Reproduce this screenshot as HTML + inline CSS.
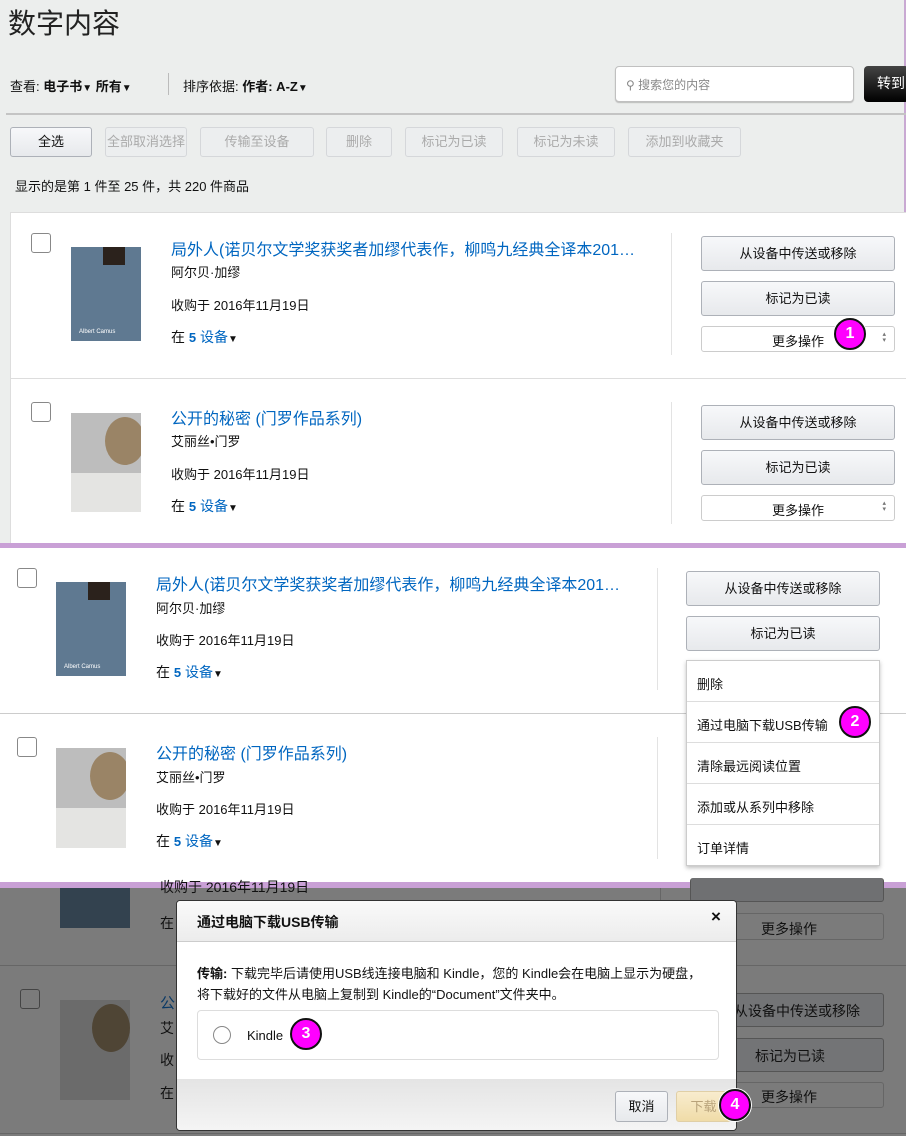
<!DOCTYPE html>
<html><head><meta charset="utf-8"><style>
*{margin:0;padding:0;box-sizing:border-box}
body{width:906px;height:1136px;position:relative;overflow:hidden;font-family:"Liberation Sans","Noto Sans CJK SC",sans-serif;color:#111;font-size:13px;background:#fff}
.a{position:absolute;white-space:nowrap}
.btn{position:absolute;border:1px solid #adb1b8;border-radius:3px;background:linear-gradient(#f7f8fa,#e7e9ec);text-align:center;font-size:13px;color:#111}
.dis{color:#aaa;border-color:#d5d7da;background:#eceeef}
.sel{position:absolute;border:1px solid #ccc;border-radius:3px;background:#fff;text-align:center;font-size:13px}
.sel:after{content:"\25B4\A\25BE";white-space:pre;position:absolute;right:8px;top:5px;font-size:7px;line-height:6px;color:#777}
.cb{position:absolute;width:20px;height:20px;border:1px solid #888;border-radius:3px;background:#fff}
.lnk{color:#0066c0}
.t{font-size:16px;color:#0066c0}
.num{position:absolute;width:32px;height:32px;border-radius:50%;background:#f0f;border:2px solid #111;box-shadow:0 0 0 1px #fff;color:#fff;font-weight:bold;font-size:16px;text-align:center;line-height:28px}
.c1{position:absolute;width:70px;background:#5f7991;overflow:hidden}
.c2{position:absolute;width:70px;background:#d8d8d8;overflow:hidden}
.tri{font-size:10px}
.dv{font-size:14px}
</style></head><body>

<!-- PANEL 1 -->
<div class="a" style="left:0;top:0;width:906px;height:545px;background:#eceeed"></div>
<div class="a" style="left:904px;top:0;width:2px;height:545px;background:#c9a9d3"></div>
<div class="a" style="left:8px;top:2px;font-size:28px;color:#222">数字内容</div>
<div class="a" style="left:10px;top:76px;font-size:13px">查看: <b>电子书</b><span class="tri">▼</span> <b>所有</b><span class="tri">▼</span></div>
<div class="a" style="left:168px;top:73px;width:1px;height:22px;background:#bbb"></div>
<div class="a" style="left:183px;top:76px;font-size:13px">排序依据: <b>作者: A-Z</b><span class="tri">▼</span></div>
<div class="a" style="left:615px;top:66px;width:239px;height:36px;border:1px solid #c0c0c0;border-radius:4px;background:#fff;box-shadow:0 1px 1px #bbb"></div>
<div class="a" style="left:626px;top:76px;font-size:12px;color:#888">⚲ 搜索您的内容</div>
<div class="a" style="left:864px;top:66px;width:45px;height:36px;border-radius:4px;background:linear-gradient(#444,#000);color:#fff;font-size:14px;padding:7px 0 0 13px">转到</div>
<div class="a" style="left:6px;top:113px;width:900px;height:2px;background:#c4c4c4"></div>
<div class="btn" style="left:10px;top:127px;width:82px;height:30px;line-height:28px">全选</div>
<div class="btn dis" style="left:105px;top:127px;width:82px;height:30px;line-height:28px">全部取消选择</div>
<div class="btn dis" style="left:200px;top:127px;width:114px;height:30px;line-height:28px">传输至设备</div>
<div class="btn dis" style="left:326px;top:127px;width:66px;height:30px;line-height:28px">删除</div>
<div class="btn dis" style="left:405px;top:127px;width:98px;height:30px;line-height:28px">标记为已读</div>
<div class="btn dis" style="left:517px;top:127px;width:98px;height:30px;line-height:28px">标记为未读</div>
<div class="btn dis" style="left:628px;top:127px;width:113px;height:30px;line-height:28px">添加到收藏夹</div>
<div class="a" style="left:15px;top:176px;font-size:13px">显示的是第 1 件至 25 件，共 220 件商品</div>
<div class="a" style="left:10px;top:212px;width:896px;height:333px;background:#fff;border:1px solid #ddd;border-right:none"></div>
<div class="a" style="left:10px;top:378px;width:896px;height:1px;background:#ddd"></div>
<div class="a" style="left:671px;top:233px;width:1px;height:122px;background:#e3e3e3"></div>
<div class="a" style="left:671px;top:402px;width:1px;height:122px;background:#e3e3e3"></div>
<!-- item1 -->
<div class="cb" style="left:31px;top:233px"></div>
<div class="c1" style="left:71px;top:247px;height:94px"><div style="position:absolute;left:32px;top:0;width:22px;height:18px;background:#2b221c"></div><div style="position:absolute;left:8px;top:82px;width:50px;font-size:6px;color:#fff">Albert Camus</div></div>
<div class="a t" style="left:171px;top:236px">局外人(诺贝尔文学奖获奖者加缪代表作，柳鸣九经典全译本201…</div>
<div class="a" style="left:171px;top:262px;font-size:13px">阿尔贝·加缪</div>
<div class="a" style="left:171px;top:295px;font-size:13px">收购于 2016年11月19日</div>
<div class="a dv" style="left:171px;top:327px">在 <span class="lnk"><b style="font-size:13px">5</b> 设备</span><span class="tri">▼</span></div>
<div class="btn" style="left:701px;top:236px;width:194px;height:35px;line-height:33px">从设备中传送或移除</div>
<div class="btn" style="left:701px;top:281px;width:194px;height:35px;line-height:33px">标记为已读</div>
<div class="sel" style="left:701px;top:326px;width:194px;height:26px;line-height:30px">更多操作</div>
<div class="num" style="left:834px;top:318px">1</div>
<!-- item2 -->
<div class="cb" style="left:31px;top:402px"></div>
<div class="c2" style="left:71px;top:413px;height:99px"><div style="position:absolute;left:0;top:0;width:70px;height:60px;background:#bdbdbd"></div><div style="position:absolute;left:34px;top:4px;width:40px;height:48px;border-radius:50%;background:#9a8466"></div><div style="position:absolute;left:0;top:60px;width:70px;height:39px;background:#e4e4e2"></div></div>
<div class="a t" style="left:171px;top:405px">公开的秘密 (门罗作品系列)</div>
<div class="a" style="left:171px;top:431px;font-size:13px">艾丽丝•门罗</div>
<div class="a" style="left:171px;top:464px;font-size:13px">收购于 2016年11月19日</div>
<div class="a dv" style="left:171px;top:496px">在 <span class="lnk"><b style="font-size:13px">5</b> 设备</span><span class="tri">▼</span></div>
<div class="btn" style="left:701px;top:405px;width:194px;height:35px;line-height:33px">从设备中传送或移除</div>
<div class="btn" style="left:701px;top:450px;width:194px;height:35px;line-height:33px">标记为已读</div>
<div class="sel" style="left:701px;top:495px;width:194px;height:26px;line-height:30px">更多操作</div>
<div class="a" style="left:0;top:543px;width:906px;height:5px;background:#c9a0d6"></div>

<!-- PANEL 2 -->
<div class="cb" style="left:17px;top:568px"></div>
<div class="c1" style="left:56px;top:582px;height:94px"><div style="position:absolute;left:32px;top:0;width:22px;height:18px;background:#2b221c"></div><div style="position:absolute;left:8px;top:82px;width:50px;font-size:6px;color:#fff">Albert Camus</div></div>
<div class="a t" style="left:156px;top:571px">局外人(诺贝尔文学奖获奖者加缪代表作，柳鸣九经典全译本201…</div>
<div class="a" style="left:156px;top:598px;font-size:13px">阿尔贝·加缪</div>
<div class="a" style="left:156px;top:630px;font-size:13px">收购于 2016年11月19日</div>
<div class="a dv" style="left:156px;top:662px">在 <span class="lnk"><b style="font-size:13px">5</b> 设备</span><span class="tri">▼</span></div>
<div class="a" style="left:657px;top:568px;width:1px;height:122px;background:#e3e3e3"></div>
<div class="a" style="left:0;top:713px;width:906px;height:1px;background:#ccc"></div>
<div class="cb" style="left:17px;top:737px"></div>
<div class="c2" style="left:56px;top:748px;height:100px"><div style="position:absolute;left:0;top:0;width:70px;height:60px;background:#bdbdbd"></div><div style="position:absolute;left:34px;top:4px;width:40px;height:48px;border-radius:50%;background:#9a8466"></div><div style="position:absolute;left:0;top:60px;width:70px;height:40px;background:#e4e4e2"></div></div>
<div class="a t" style="left:156px;top:740px">公开的秘密 (门罗作品系列)</div>
<div class="a" style="left:156px;top:767px;font-size:13px">艾丽丝•门罗</div>
<div class="a" style="left:156px;top:799px;font-size:13px">收购于 2016年11月19日</div>
<div class="a dv" style="left:156px;top:831px">在 <span class="lnk"><b style="font-size:13px">5</b> 设备</span><span class="tri">▼</span></div>
<div class="a" style="left:657px;top:737px;width:1px;height:122px;background:#e3e3e3"></div>
<div class="btn" style="left:686px;top:571px;width:194px;height:35px;line-height:33px">从设备中传送或移除</div>
<div class="btn" style="left:686px;top:616px;width:194px;height:35px;line-height:33px">标记为已读</div>
<div class="a" style="left:686px;top:660px;width:194px;height:206px;background:#fff;border:1px solid #ccc;box-shadow:0 2px 4px rgba(0,0,0,.25)"></div>
<div class="a" style="left:697px;top:674px">删除</div>
<div class="a" style="left:687px;top:701px;width:192px;height:1px;background:#ddd"></div>
<div class="a" style="left:697px;top:715px">通过电脑下载USB传输</div>
<div class="a" style="left:687px;top:742px;width:192px;height:1px;background:#ddd"></div>
<div class="a" style="left:697px;top:756px">清除最远阅读位置</div>
<div class="a" style="left:687px;top:783px;width:192px;height:1px;background:#ddd"></div>
<div class="a" style="left:697px;top:797px">添加或从系列中移除</div>
<div class="a" style="left:687px;top:824px;width:192px;height:1px;background:#ddd"></div>
<div class="a" style="left:697px;top:838px">订单详情</div>
<div class="num" style="left:839px;top:706px">2</div>
<div class="a" style="left:0;top:882px;width:906px;height:6px;background:#c9a0d6"></div>

<!-- PANEL 3 -->
<div class="a" style="left:0;top:888px;width:906px;height:248px;background:#7b7b7b"></div>
<div class="a" style="left:60px;top:888px;width:70px;height:40px;background:#33424f"></div>
<div class="a" style="left:160px;top:877px;font-size:14px;color:#111">收购于 2016年11月19日</div>
<div class="a" style="left:160px;top:913px;font-size:14px;color:#111">在</div>
<div class="a" style="left:660px;top:888px;width:1px;height:70px;background:#666"></div>
<div class="a" style="left:690px;top:878px;width:194px;height:24px;border:1px solid #555;border-top:none;border-radius:3px;background:#6f7072"></div>
<div class="a" style="left:690px;top:913px;width:194px;height:27px;border:1px solid #666;border-radius:3px;background:#7b7b7b;font-size:14px;padding:5px 0 0 70px">更多操作</div>
<div class="a" style="left:0;top:965px;width:906px;height:1px;background:#666"></div>
<div class="a" style="left:20px;top:989px;width:20px;height:20px;border:1px solid #444;border-radius:3px"></div>
<div class="a" style="left:60px;top:1000px;width:70px;height:100px;background:#6b6b6b"><div style="position:absolute;left:32px;top:4px;width:38px;height:48px;border-radius:50%;background:#4f4535"></div></div>
<div class="a" style="left:160px;top:992px;font-size:15px;color:#0b3a66">公</div>
<div class="a" style="left:160px;top:1018px;font-size:14px">艾</div>
<div class="a" style="left:160px;top:1050px;font-size:14px">收</div>
<div class="a" style="left:160px;top:1083px;font-size:14px">在</div>
<div class="a" style="left:690px;top:993px;width:194px;height:34px;border:1px solid #555;border-radius:3px;background:#737476;font-size:14px;padding:7px 0 0 43px">从设备中传送或移除</div>
<div class="a" style="left:690px;top:1038px;width:194px;height:34px;border:1px solid #555;border-radius:3px;background:#737476;font-size:14px;padding:7px 0 0 64px">标记为已读</div>
<div class="a" style="left:690px;top:1082px;width:194px;height:26px;border:1px solid #666;border-radius:3px;background:#7b7b7b;font-size:14px;padding:4px 0 0 70px">更多操作</div>
<div class="a" style="left:0;top:1133px;width:906px;height:1px;background:#666"></div>
<!-- modal -->
<div class="a" style="left:176px;top:900px;width:561px;height:231px;background:#fff;border:1px solid #333;border-radius:4px;overflow:hidden">
 <div style="position:absolute;left:0;top:0;width:561px;height:41px;background:linear-gradient(#fafafa,#ececec);border-bottom:1px solid #ccc"></div>
 <div class="a" style="left:20px;top:11px;font-size:14px;font-weight:bold">通过电脑下载USB传输</div>
 <div class="a" style="left:534px;top:6px;font-size:17px;font-weight:bold">×</div>
 <div class="a" style="left:20px;top:62px;font-size:13px"><b>传输:</b> 下载完毕后请使用USB线连接电脑和 Kindle，您的 Kindle会在电脑上显示为硬盘，</div>
 <div class="a" style="left:20px;top:83px;font-size:13px">将下载好的文件从电脑上复制到 Kindle的“Document”文件夹中。</div>
 <div class="a" style="left:20px;top:109px;width:522px;height:50px;border:1px solid #ddd;border-radius:4px"></div>
 <div class="a" style="left:36px;top:125px;width:18px;height:18px;border:1px solid #888;border-radius:50%"></div>
 <div class="a" style="left:70px;top:127px;font-size:13px">Kindle</div>
 <div style="position:absolute;left:0;top:178px;width:561px;height:53px;background:linear-gradient(#e4e4e4,#f5f5f5)"></div>
 <div class="btn" style="left:438px;top:190px;width:53px;height:31px;line-height:29px;font-size:13px">取消</div>
 <div class="btn" style="left:499px;top:190px;width:55px;height:31px;line-height:29px;font-size:13px;color:#b8a27a;border-color:#e0cfa6;background:linear-gradient(#f8ecce,#f0dca8)">下载</div>
</div>
<div class="num" style="left:290px;top:1018px">3</div>
<div class="num" style="left:719px;top:1089px">4</div>
</body></html>
